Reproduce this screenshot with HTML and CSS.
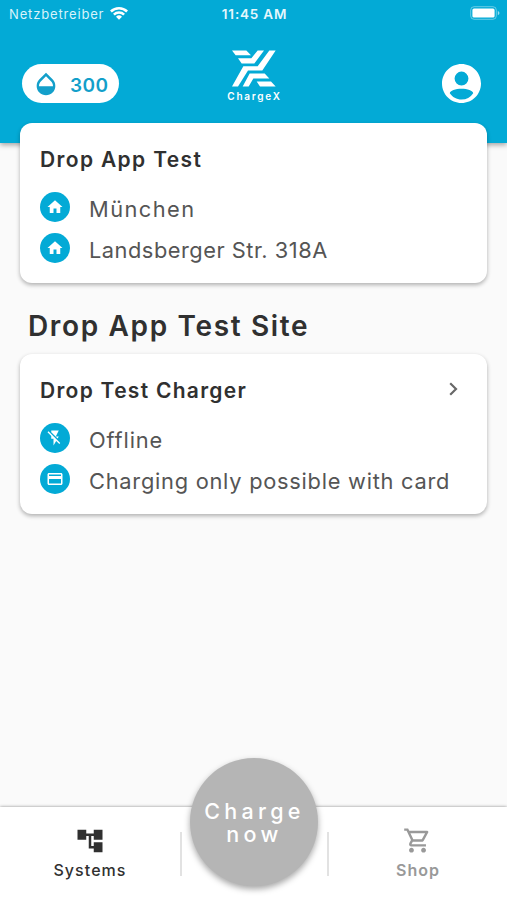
FILE: index.html
```html
<!DOCTYPE html>
<html lang="en">
<head>
<meta charset="utf-8">
<title>ChargeX</title>
<link rel="stylesheet" href="styles.css">
</head>
<body>
<div class="app">
  <header class="header">
    <div class="status">
      <div class="carrier"><span>Netzbetreiber</span>
        <svg class="wifi" viewBox="0 0 18 14"><path d="M0 4.6a13 13 0 0 1 18 0L16.2 6.4a10.4 10.4 0 0 0-14.4 0zM3 7.7a8.6 8.6 0 0 1 12 0l-1.8 1.8a6 6 0 0 0-8.4 0zM6 10.8a4.3 4.3 0 0 1 6 0L9 13.8z"/></svg>
      </div>
      <span class="time">11:45 AM</span>
      <svg class="battery" viewBox="0 0 30 14"><rect x=".7" y=".7" width="25.6" height="12.6" rx="3.4" fill="none" stroke="#fff" stroke-opacity=".4"/><rect x="2.4" y="2.4" width="22.2" height="9.2" rx="1.6"/><path d="M27.8 4.7q3.4 2.3 0 4.6z" opacity=".6"/></svg>
    </div>
    <div class="toolbar">
      <div class="points">
        <svg class="drop" viewBox="0 0 24 24"><path d="M17.66 8 12 2.35 6.34 8C4.78 9.56 4 11.64 4 13.64s.78 4.11 2.34 5.67S9.95 21.64 12 21.64s4.1-.77 5.66-2.33S20 15.64 20 13.64 19.22 9.56 17.66 8zM6 14c.01-2 .62-3.27 1.76-4.4L12 5.27l4.24 4.38C17.38 10.77 17.99 12 18 14H6z"/></svg>
        <span>300</span>
      </div>
      <div class="brand">
        <svg class="mark" viewBox="0 0 132 110"><path d="M0 1H43L57 15H11ZM18 24H58L77 1H96L67 40H29ZM112 1H131L91 61H48L18 109H0L34 48H77ZM53 70H98L112 85H64L50 109H32ZM74 94H117L131 109H84Z"/></svg>
        <span>ChargeX</span>
      </div>
      <svg class="avatar" viewBox="2 2 20 20"><path d="M12 2C6.480 2 2 6.480 2 12s4.480 10 10 10 10-4.480 10-10S17.520 2 12 2zm0 3.900a3.550 3.550 0 1 1 0 7.100 3.550 3.550 0 0 1 0-7.100zm0 14.300c-2.500 0-4.710-1.280-6-3.220.030-1.200 3-2.300 6-2.300s5.970 1.100 6 2.300a7.200 7.200 0 0 1-6 3.220z"/></svg>
    </div>
  </header>

  <main class="content">
    <section class="card">
      <h2 class="heading site">Drop App Test</h2>
      <div class="row"><span class="dot"><svg viewBox="0 0 24 24"><path d="M10 20v-6h4v6h5v-8h3L12 3 2 12h3v8z"/></svg></span><span class="city">München</span></div>
      <div class="row"><span class="dot"><svg viewBox="0 0 24 24"><path d="M10 20v-6h4v6h5v-8h3L12 3 2 12h3v8z"/></svg></span><span class="street">Landsberger Str. 318A</span></div>
    </section>
    <h1 class="title">Drop App Test Site</h1>
    <section class="card">
      <div class="card-head">
        <h2 class="heading charger">Drop Test Charger</h2>
        <svg class="chevron" viewBox="0 0 9 14"><path d="M1.2 1.2 7 7l-5.8 5.8"/></svg>
      </div>
      <div class="row"><span class="dot"><svg viewBox="0 0 24 24"><path d="M3.27 3 2 4.27l5 5V13h3v9l3.58-6.14L17.73 20 19 18.73 3.27 3zM17 10h-4l4-8H7v2.18l8.46 8.46L17 10z"/></svg></span><span class="state">Offline</span></div>
      <div class="row"><span class="dot"><svg viewBox="0 0 24 24"><path d="M20 4H4c-1.11 0-1.99.89-1.99 2L2 18c0 1.11.89 2 2 2h16c1.11 0 2-.89 2-2V6c0-1.11-.89-2-2-2zm0 14H4v-6h16v6zm0-10H4V6h16v2z"/></svg></span><span class="note">Charging only possible with card</span></div>
    </section>
  </main>

  <nav class="nav">
    <a class="tab systems"><svg viewBox="0 0 24 24"><path d="M22 11V3h-7v3H9V3H2v8h7V8h2v10h4v3h7v-8h-7v3h-2V8h2v3z"/></svg><span>Systems</span></a>
    <div class="middle"><button class="charge">Charge<br>now</button></div>
    <a class="tab shop"><svg viewBox="0 0 24 24"><path d="M15.55 13c.75 0 1.41-.41 1.75-1.03l3.58-6.49A.996.996 0 0 0 20.01 4H5.21l-.94-2H1v2h2l3.6 7.59-1.35 2.44C4.52 15.37 5.48 17 7 17h12v-2H7l1.1-2h7.45zM6.16 6h12.15l-2.76 5H8.53L6.16 6zM7 18c-1.1 0-1.99.9-1.99 2S5.9 22 7 22s2-.9 2-2-.9-2-2-2zm10 0c-1.1 0-1.99.9-1.99 2s.89 2 1.99 2 2-.9 2-2-.9-2-2-2z"/></svg><span>Shop</span></a>
  </nav>
</div>
</body>
</html>
```

FILE: styles.css
```css
* { box-sizing: border-box; }
body { margin: 0; font-family: Inter, "Liberation Sans", sans-serif; color: #303030; }
h1, h2 { margin: 0; }
svg { display: block; fill: currentColor; flex: none; }
span, h1, h2 { white-space: nowrap; }

.app { width: 507px; height: 900px; display: flex; flex-direction: column; overflow: hidden; background: #fafafa; }

.header { height: 143px; flex: none; background: #03aad6; color: #fff; box-shadow: 0 2px 5px rgba(0, 0, 0, .35); }
.status { height: 28px; display: grid; grid-template-columns: 1fr auto 1fr; align-items: center; padding: 0 7px 0 9px; font-size: 13px; }
.carrier { display: flex; align-items: center; gap: 6px; letter-spacing: .84px; color: #d9f3fa; }
.wifi { width: 18px; height: 14px; margin-top: -3px; color: #fff; }
.time { font-size: 13.5px; font-weight: 600; letter-spacing: .8px; color: #e6f7fc; }
.battery { width: 30px; height: 14px; justify-self: end; margin-top: -2px; }

.toolbar { display: grid; grid-template-columns: 1fr 60px 1fr; padding: 22px 26px 0 26px; }
.points { width: 97px; height: 39px; margin: 14px 0 0 -4px; border-radius: 20px; background: #fff; color: #139fca; display: flex; align-items: center; padding-left: 10px; gap: 10px; font-size: 19px; font-weight: 600; letter-spacing: .5px; }
.points span { padding-top: 3px; }
.drop { width: 28px; height: 28px; }
.brand { display: flex; flex-direction: column; align-items: center; font-size: 10px; font-weight: 600; line-height: 12px; letter-spacing: 1.75px; }
.brand span { padding-left: 2px; }
.mark { width: 44px; height: 37px; margin-bottom: 3px; }
.avatar { width: 39px; height: 39px; margin-top: 14px; justify-self: end; }

.content { flex: 1; margin-top: -20px; padding: 0 20px; position: relative; }
.card { height: 160px; padding: 22px 21px 0 20px; border-radius: 12px; background: #fff; box-shadow: 0 2px 4px rgba(0, 0, 0, .3); }
.card-head { display: flex; justify-content: space-between; }
.heading { height: 42px; font-size: 21px; font-weight: 600; line-height: 29px; }
.site { letter-spacing: 1.35px; }
.charger { letter-spacing: 1.28px; }
.chevron { width: 9px; height: 14px; margin: 6px 8px 0 0; fill: none; stroke: #686868; stroke-width: 2.2px; }
.row { height: 40.5px; display: flex; gap: 19px; font-size: 21.8px; line-height: 33px; color: #555; }
.dot { width: 30px; height: 30px; margin-top: 5px; border-radius: 50%; background: #03aad6; color: #fff; display: flex; align-items: center; justify-content: center; }
.dot svg { width: 18px; height: 18px; }
.row > span:last-child { padding-top: 6px; }
.city { letter-spacing: 1.45px; }
.street { letter-spacing: .52px; }
.state { letter-spacing: .85px; }
.note { letter-spacing: .75px; }
.title { height: 71px; padding: 25px 0 0 8px; font-size: 28px; font-weight: 600; line-height: 37px; letter-spacing: 1.65px; }

.nav { height: 93px; flex: none; position: relative; display: grid; grid-template-columns: 180px 149px 178px; background: #fff; box-shadow: 0 0 3px rgba(0, 0, 0, .45); }
.tab { display: flex; flex-direction: column; align-items: center; padding-top: 19px; font-size: 16px; font-weight: 500; }
.tab svg { width: 30px; height: 30px; }
.tab span { line-height: 24px; margin-top: 2px; letter-spacing: 1.05px; }
.shop { color: #999; font-weight: 600; }
.shop svg { width: 29px; height: 29px; margin: 0 2px 1px 0; }
.middle { height: 44px; margin-top: 25px; border: solid #e2e2e2; border-width: 0 2px; display: flex; align-items: flex-start; justify-content: center; }
.charge { width: 128px; height: 128px; flex: none; margin: -74px 2px 0 0; padding: 2px 0 0 2px; border: 0; border-radius: 50%; background: #b5b5b5; color: #fff; box-shadow: 0 3px 6px rgba(0, 0, 0, .35); text-align: center; font: 500 21.5px/23px Inter, sans-serif; letter-spacing: 4.3px; }
```
